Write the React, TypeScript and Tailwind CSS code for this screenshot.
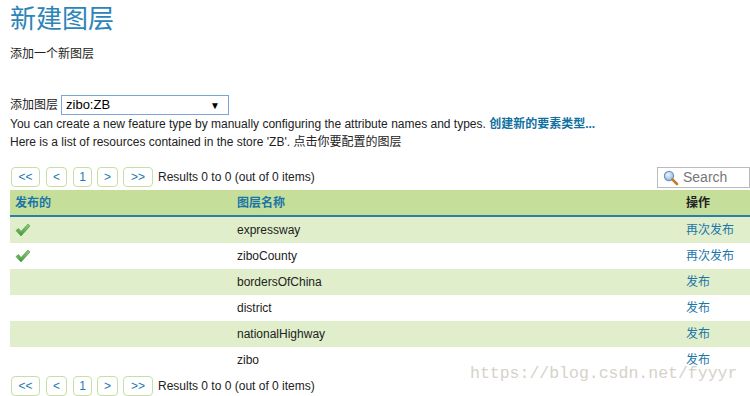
import React from "react";

const F = { fontFamily: '"Liberation Sans", "Noto Sans CJK SC", sans-serif' };

function Check() {
  return (
    <svg width="16" height="14" viewBox="0 0 16 14">
      <defs>
        <linearGradient id="cg" x1="0" y1="0" x2="0" y2="1">
          <stop offset="0" stopColor="#8fd07a" />
          <stop offset="1" stopColor="#3e9a3a" />
        </linearGradient>
      </defs>
      <path d="M1 7.5 L3.5 5.5 L6 8.5 L13 1 L15 3 L6 13 Z" fill="url(#cg)" stroke="#4a8f3d" strokeWidth="0.6" />
    </svg>
  );
}

function Pager() {
  return (
    <div className="flex items-center h-[20px] pl-[11px]">
      <div className="flex">
        <div className="w-[29px] h-[20px] border border-[#c7dfa4] rounded-[4px] flex items-center justify-center text-[12px] text-[#1b7ab0] bg-white">&lt;&lt;</div>
        <div className="ml-[6px] w-[21px] h-[20px] border border-[#c7dfa4] rounded-[4px] flex items-center justify-center text-[12px] text-[#1b7ab0] bg-white">&lt;</div>
        <div className="ml-[6px] w-[19px] h-[20px] border border-[#c7dfa4] rounded-[4px] flex items-center justify-center text-[12px] text-[#1b7ab0] bg-white">1</div>
        <div className="ml-[5px] w-[21px] h-[20px] border border-[#c7dfa4] rounded-[4px] flex items-center justify-center text-[12px] text-[#1b7ab0] bg-white">&gt;</div>
        <div className="ml-[5px] w-[30px] h-[20px] border border-[#c7dfa4] rounded-[4px] flex items-center justify-center text-[12px] text-[#1b7ab0] bg-white">&gt;&gt;</div>
      </div>
      <span className="ml-[5px] text-[12px] text-[#222]">Results 0 to 0 (out of 0 items)</span>
    </div>
  );
}

const rows = [
  { pub: true, name: "expressway", op: "再次发布" },
  { pub: true, name: "ziboCounty", op: "再次发布" },
  { pub: false, name: "bordersOfChina", op: "发布" },
  { pub: false, name: "district", op: "发布" },
  { pub: false, name: "nationalHighway", op: "发布" },
  { pub: false, name: "zibo", op: "发布" },
];

export default function App() {
  return (
    <div className="relative w-[750px] h-[396px] overflow-hidden bg-white text-[#222]" style={F}>
      <h1 className="px-[10px] pt-[3px] text-[26px] leading-[32px] text-[#2c84b8]">新建图层</h1>
      <p className="px-[10px] mt-[10px] text-[12px] leading-[18px]">添加一个新图层</p>
      <div className="px-[10px] mt-[32px] flex items-center text-[12px] h-[20px]">
        <span>添加图层</span>
        <div className="ml-[3px] w-[168px] h-[20px] border border-[#7aa7d8] flex items-center justify-between px-[4px] text-[13px] text-black">
          <span>zibo:ZB</span>
          <span className="text-[10px] mr-[4px]">▼</span>
        </div>
      </div>
      <p className="px-[10px] text-[12px] leading-[18px]">
        You can create a new feature type by manually configuring the attribute names and types.{" "}
        <span className="font-bold text-[#1070a0]">创建新的要素类型...</span>
      </p>
      <p className="px-[10px] text-[12px] leading-[18px]">Here is a list of resources contained in the store 'ZB'. 点击你要配置的图层</p>
      <div className="mt-[16px] relative">
        <Pager />
        <div className="absolute right-0 top-0 w-[93px] h-[21px] border border-[#bbb] bg-white flex items-center pl-[5px]">
          <svg width="16" height="16" viewBox="0 0 16 16">
            <defs>
              <radialGradient id="lg" cx="0.4" cy="0.35" r="0.7">
                <stop offset="0" stopColor="#eaf4ff" />
                <stop offset="1" stopColor="#8cb6e0" />
              </radialGradient>
            </defs>
            <circle cx="6" cy="6" r="4.6" fill="url(#lg)" stroke="#6e95bd" strokeWidth="1.2" />
            <path d="M9.3 9.3 L14 14" stroke="#c07a2a" strokeWidth="2.6" strokeLinecap="round" />
          </svg>
          <span className="ml-[4px] text-[14px] text-[#777]">Search</span>
        </div>
      </div>
      <div className="ml-[10px] mt-[3px] w-[760px]">
        <div className="flex h-[27px] items-center bg-[#c5df9a] border-b-2 border-[#2a7fa6] text-[12px] font-bold">
          <div className="w-[222px] pl-[5px] text-[#1a75a8]">发布的</div>
          <div className="w-[449px] pl-[5px] text-[#1a75a8]">图层名称</div>
          <div className="pl-[5px] text-[#222]">操作</div>
        </div>
        {rows.map((r, i) => (
          <div key={i} className={`flex h-[26px] items-center text-[12px] ${i % 2 === 0 ? "bg-[#e0eecb]" : "bg-white"}`}>
            <div className="w-[222px] pl-[5px] flex items-center">{r.pub && <Check />}</div>
            <div className="w-[449px] pl-[5px] text-[#222]">{r.name}</div>
            <div className="pl-[5px] text-[#1a75a8]">{r.op}</div>
          </div>
        ))}
      </div>
      <div className="mt-[3px]">
        <Pager />
      </div>
      <div
        className="absolute left-[470px] top-[362px] text-[16.5px] text-[#d6d2ca] whitespace-nowrap"
        style={{ fontFamily: '"Liberation Mono", monospace' }}
      >
        https://blog.csdn.net/fyyyr
      </div>
    </div>
  );
}
